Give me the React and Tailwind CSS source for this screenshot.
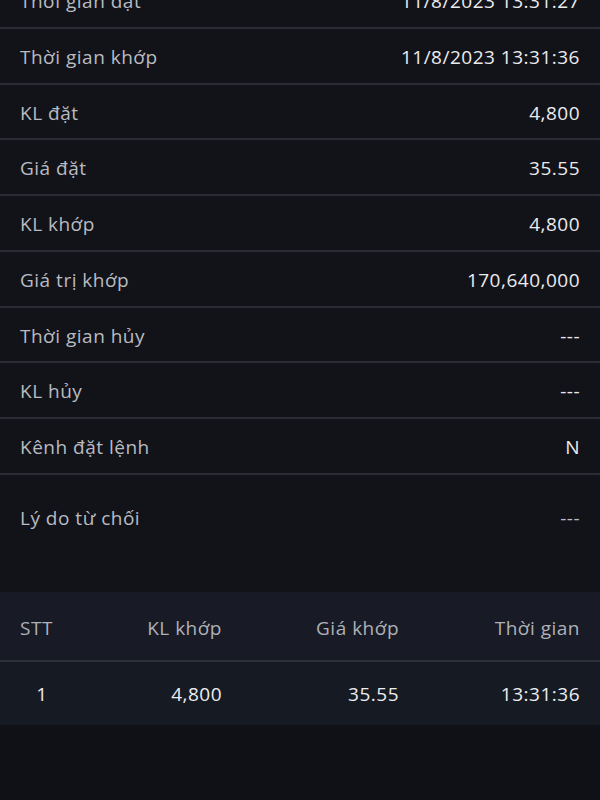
export default function App() {
  const rows = [
    ["Thời gian đặt", "11/8/2023 13:31:27"],
    ["Thời gian khớp", "11/8/2023 13:31:36"],
    ["KL đặt", "4,800"],
    ["Giá đặt", "35.55"],
    ["KL khớp", "4,800"],
    ["Giá trị khớp", "170,640,000"],
    ["Thời gian hủy", "---"],
    ["KL hủy", "---"],
    ["Kênh đặt lệnh", "N"],
  ];
  return (
    <div
      className="w-[600px] h-[800px] overflow-hidden bg-[#0f1116] text-[19px] tracking-[0.5px]"
      style={{ fontFamily: "'Open Sans', 'Noto Sans', sans-serif" }}
    >
      <div className="bg-[#121319] -mt-[27px]">
        {rows.map(([k, v], i) => (
          <div
            key={i}
            className="h-[55.75px] flex items-center justify-between px-5 pt-[3px] border-b-2 border-[#292c34]"
          >
            <span className="text-[#b9bbc1]">{k}</span>
            <span className="text-[#ebebed]">{v}</span>
          </div>
        ))}
        <div className="h-[117px] flex items-start justify-between px-5 pt-[29px]">
          <span className="text-[#b9bbc1]">Lý do từ chối</span>
          <span className="text-[#b9bbc1]">---</span>
        </div>
      </div>
      <div className="bg-[#181b25] h-[70px] grid grid-cols-[44px_158px_177px_1fr] items-center px-5 pt-[5px] text-[#aeb1b8] border-b-2 border-[#2c3039]">
        <span>STT</span>
        <span className="text-right">KL khớp</span>
        <span className="text-right">Giá khớp</span>
        <span className="text-right">Thời gian</span>
      </div>
      <div className="bg-[#161a23] h-[63px] grid grid-cols-[44px_158px_177px_1fr] items-center px-5 pt-[2px] text-[#ededef]">
        <span className="text-center">1</span>
        <span className="text-right">4,800</span>
        <span className="text-right">35.55</span>
        <span className="text-right">13:31:36</span>
      </div>
    </div>
  );
}
